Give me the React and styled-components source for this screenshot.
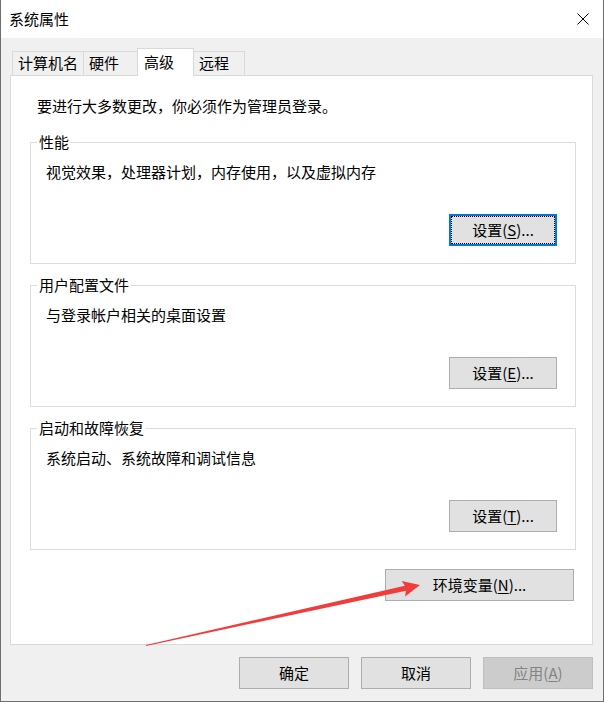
import React from 'react';
import styled, { createGlobalStyle, css } from 'styled-components';

const GlobalStyle = createGlobalStyle`
  html, body {
    margin: 0;
    padding: 0;
    background: #ffffff;
  }
  body {
    font-family: "Noto Sans CJK SC", "Noto Sans", sans-serif;
    font-size: 15px;
    color: #000;
  }
`;

const tabs = [
  { label: '计算机名', width: 72 },
  { label: '硬件', width: 55 },
  { label: '高级', width: 57, active: true },
  { label: '远程', width: 52 },
];

const groups = [
  {
    title: '性能',
    text: '视觉效果，处理器计划，内存使用，以及虚拟内存',
    key: 'S',
    focused: true,
  },
  {
    title: '用户配置文件',
    text: '与登录帐户相关的桌面设置',
    key: 'E',
  },
  {
    title: '启动和故障恢复',
    text: '系统启动、系统故障和调试信息',
    key: 'T',
  },
];

const GroupBox = ({ title, text, hotkey, focused }) => (
  <Fieldset>
    <Legend>{title}</Legend>
    <GroupText>{text}</GroupText>
    <GroupActions>
      <Button $width={108} $focused={focused}>
        设置(<u>{hotkey}</u>)...
      </Button>
    </GroupActions>
  </Fieldset>
);

const App = () => {
  return (
    <>
      <GlobalStyle />
      <Window>
        <TitleBar>
          <Title>系统属性</Title>
          <Close>
            <svg width="12" height="12" viewBox="0 0 12 12">
              <path d="M0.5 0.5 L11.5 11.5 M11.5 0.5 L0.5 11.5" stroke="#000" strokeWidth="1" fill="none" />
            </svg>
          </Close>
        </TitleBar>

        <Body>
          <TabRow>
            {tabs.map((t) => (
              <Tab key={t.label} $width={t.width} $active={t.active}>
                {t.label}
              </Tab>
            ))}
          </TabRow>

          <Panel>
            <Intro>要进行大多数更改，你必须作为管理员登录。</Intro>
            <Groups>
              {groups.map((g) => (
                <GroupBox
                  key={g.title}
                  title={g.title}
                  text={g.text}
                  hotkey={g.key}
                  focused={g.focused}
                />
              ))}
            </Groups>
            <EnvRow>
              <Button $width={189}>
                环境变量(<u>N</u>)...
              </Button>
            </EnvRow>
          </Panel>

          <Footer>
            <Button $width={110}>确定</Button>
            <Button $width={110}>取消</Button>
            <Button $width={110} $disabled>
              应用(<u>A</u>)
            </Button>
          </Footer>
        </Body>

        {/* red annotation arrow drawn over the dialog */}
        <ArrowLayer width="604" height="702" viewBox="0 0 604 702">
          <polygon
            points="145.9,645 404.9,585.8 401.7,580.9 420,585 405.1,596.5 405.9,590.7 146.1,646"
            fill="#f23b3b"
          />
        </ArrowLayer>
      </Window>
    </>
  );
};

export default App;

const Window = styled.div`
  position: relative;
  width: 604px;
  height: 702px;
  box-sizing: border-box;
  border: 1px solid #6e6e6e;
  border-top: none;
  background: #f0f0f0;
  display: flex;
  flex-direction: column;
  overflow: hidden;
`;

const TitleBar = styled.div`
  height: 38px;
  flex-shrink: 0;
  display: flex;
  align-items: center;
  justify-content: space-between;
  background: #ffffff;
  padding-left: 8px;
`;

const Title = styled.div`
  font-size: 15px;
  line-height: 20px;
`;

const Close = styled.div`
  width: 40px;
  height: 38px;
  display: flex;
  align-items: center;
  justify-content: center;
`;

const Body = styled.div`
  display: flex;
  flex-direction: column;
  padding: 10px 10px 0 9px;
`;

const TabRow = styled.div`
  display: flex;
  align-items: flex-end;
  height: 28px;
  padding-left: 2px;
  margin-bottom: -1px;
`;

const Tab = styled.div`
  position: relative;
  box-sizing: border-box;
  width: ${({ $width }) => $width}px;
  height: 24px;
  margin-right: -1px;
  margin-bottom: 1px;
  padding-left: 5px;
  border: 1px solid #d9d9d9;
  border-bottom: none;
  background: #f0f0f0;
  font-size: 15px;
  line-height: 22px;
  white-space: nowrap;

  ${({ $active }) =>
    $active &&
    css`
      z-index: 1;
      height: 28px;
      margin-bottom: 0;
      padding-left: 6px;
      padding-top: 2px;
      background: #ffffff;
    `}
`;

const Panel = styled.div`
  box-sizing: border-box;
  height: 570px;
  border: 1px solid #d9d9d9;
  background: #ffffff;
  padding: 20px 16px 0 19px;
  display: flex;
  flex-direction: column;
`;

const Intro = styled.div`
  padding-left: 7px;
  line-height: 20px;
  margin-bottom: 16px;
`;

const Groups = styled.div`
  display: flex;
  flex-direction: column;
  gap: 11px;
`;

const Fieldset = styled.fieldset`
  margin: 0;
  min-width: 0;
  padding: 10px 18px 17px 15px;
  border: 1px solid #dcdcdc;
  display: flex;
  flex-direction: column;
`;

const Legend = styled.legend`
  margin-left: -9px;
  padding: 0 2px;
  font-size: 15px;
  line-height: 20px;
`;

const GroupText = styled.div`
  line-height: 20px;
`;

const GroupActions = styled.div`
  display: flex;
  justify-content: flex-end;
  margin-top: 32px;
`;

const EnvRow = styled.div`
  display: flex;
  justify-content: flex-end;
  margin-top: 19px;
  padding-right: 2px;
`;

const Footer = styled.div`
  display: flex;
  justify-content: flex-end;
  gap: 12px;
  margin-top: 12px;
`;

const Button = styled.button`
  box-sizing: border-box;
  width: ${({ $width }) => $width}px;
  height: 32px;
  padding: 0;
  border: 1px solid #adadad;
  background: #e1e1e1;
  color: #000;
  font-family: inherit;
  font-size: 15px;
  line-height: 20px;
  display: flex;
  align-items: center;
  justify-content: center;
  cursor: default;

  u {
    text-decoration-thickness: 1px;
    text-underline-offset: 2px;
  }

  ${({ $focused }) =>
    $focused &&
    css`
      border: 2px solid #0078d7;
      outline: 1px dotted #000;
      outline-offset: -3px;
    `}

  ${({ $disabled }) =>
    $disabled &&
    css`
      background: #cccccc;
      border-color: #bfbfbf;
      color: #838383;
    `}
`;

const ArrowLayer = styled.svg`
  position: absolute;
  left: -1px;
  top: 0;
  pointer-events: none;
`;
